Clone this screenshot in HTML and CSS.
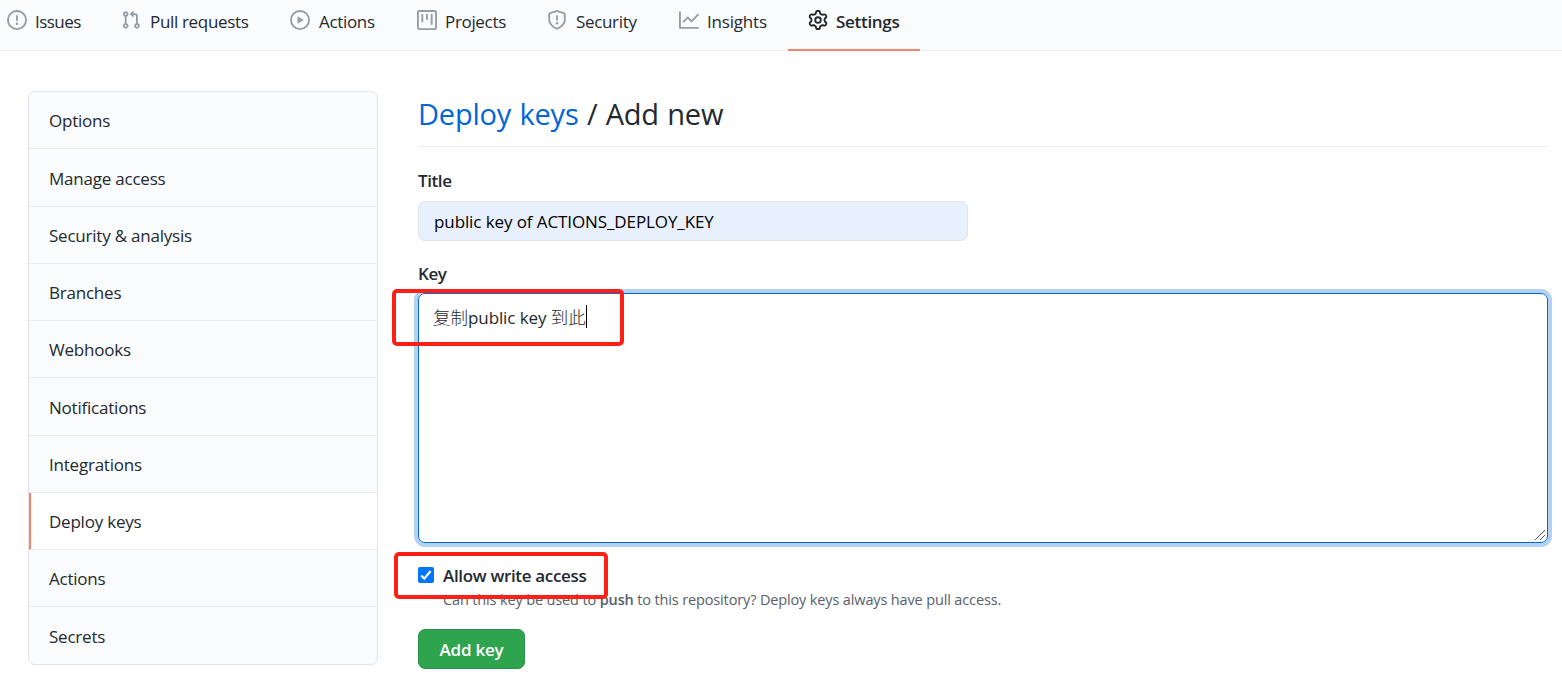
FILE: index.html
```html
<!DOCTYPE html>
<html lang="en">
<head>
<meta charset="utf-8">
<title>Deploy keys</title>
<link rel="stylesheet" href="styles.css">
</head>
<body>
<nav class="tabs">
  <a class="tab tab-issues"><svg class="icon" viewBox="0 0 16 16"><path fill-rule="evenodd" d="M8 1.5a6.5 6.5 0 100 13 6.5 6.5 0 000-13zM0 8a8 8 0 1116 0A8 8 0 010 8zm9 3a1 1 0 11-2 0 1 1 0 012 0zm-.25-6.25a.75.75 0 00-1.5 0v3.5a.75.75 0 001.5 0v-3.5z"/></svg><span>Issues</span></a>
  <a class="tab tab-pulls"><svg class="icon" viewBox="0 0 16 16"><path fill-rule="evenodd" d="M7.177 3.073L9.573.677A.25.25 0 0110 .854v4.792a.25.25 0 01-.427.177L7.177 3.427a.25.25 0 010-.354zM3.75 2.5a.75.75 0 100 1.5.75.75 0 000-1.5zm-2.25.75a2.25 2.25 0 113 2.122v5.256a2.251 2.251 0 11-1.5 0V5.372A2.25 2.25 0 011.5 3.25zM11 2.5h-1V4h1a1 1 0 011 1v5.628a2.251 2.251 0 101.5 0V5A2.5 2.5 0 0011 2.5zm1 10.25a.75.75 0 111.5 0 .75.75 0 01-1.5 0zM3.75 12a.75.75 0 100 1.5.75.75 0 000-1.5z"/></svg><span>Pull requests</span></a>
  <a class="tab tab-actions"><svg class="icon" viewBox="0 0 16 16"><path fill-rule="evenodd" d="M1.5 8a6.5 6.5 0 1113 0 6.5 6.5 0 01-13 0zM8 0a8 8 0 100 16A8 8 0 008 0zM6.379 5.227A.25.25 0 006 5.442v5.117a.25.25 0 00.379.214l4.264-2.559a.25.25 0 000-.428L6.379 5.227z"/></svg><span>Actions</span></a>
  <a class="tab tab-projects"><svg class="icon" viewBox="0 0 16 16"><path fill-rule="evenodd" d="M1.75 0A1.75 1.75 0 000 1.75v12.5C0 15.216.784 16 1.75 16h12.5A1.75 1.75 0 0016 14.25V1.75A1.75 1.75 0 0014.25 0H1.75zM1.5 1.75a.25.25 0 01.25-.25h12.5a.25.25 0 01.25.25v12.5a.25.25 0 01-.25.25H1.75a.25.25 0 01-.25-.25V1.75zM11.75 3a.75.75 0 00-.75.75v7.5a.75.75 0 001.5 0v-7.5a.75.75 0 00-.75-.75zm-8.25.75a.75.75 0 011.5 0v5.5a.75.75 0 01-1.5 0v-5.5zM8 3a.75.75 0 00-.75.75v3.5a.75.75 0 001.5 0v-3.5A.75.75 0 008 3z"/></svg><span>Projects</span></a>
  <a class="tab tab-security"><svg class="icon" viewBox="0 0 16 16"><path fill-rule="evenodd" d="M7.467.133a1.75 1.75 0 011.066 0l5.25 1.68A1.75 1.75 0 0115 3.48V7c0 1.566-.32 3.182-1.303 4.682-.983 1.498-2.585 2.813-5.032 3.855a1.7 1.7 0 01-1.33 0c-2.447-1.042-4.049-2.357-5.032-3.855C1.32 10.182 1 8.566 1 7V3.48a1.75 1.75 0 011.217-1.667l5.25-1.68zm.61 1.429a.25.25 0 00-.153 0l-5.25 1.68a.25.25 0 00-.174.238V7c0 1.358.275 2.666 1.057 3.86.784 1.194 2.121 2.34 4.366 3.297a.2.2 0 00.154 0c2.245-.956 3.582-2.104 4.366-3.298C13.225 9.666 13.5 8.36 13.5 7V3.48a.25.25 0 00-.174-.237l-5.25-1.68zM9 10.5a1 1 0 11-2 0 1 1 0 012 0zm-.25-5.75a.75.75 0 10-1.5 0v3a.75.75 0 001.5 0v-3z"/></svg><span>Security</span></a>
  <a class="tab tab-insights"><svg class="icon" viewBox="0 0 16 16"><path fill-rule="evenodd" d="M1.5 1.75a.75.75 0 00-1.5 0v12.5c0 .414.336.75.75.75h14.5a.75.75 0 000-1.5H1.5V1.75zm14.28 2.53a.75.75 0 00-1.06-1.06L10 7.94 7.53 5.47a.75.75 0 00-1.06 0L3.22 8.72a.75.75 0 001.06 1.06L7 7.06l2.47 2.47a.75.75 0 001.06 0l5.25-5.25z"/></svg><span>Insights</span></a>
  <a class="tab tab-settings"><svg class="icon" viewBox="0 0 16 16"><path fill-rule="evenodd" d="M7.429 1.525a6.593 6.593 0 011.142 0c.036.003.108.036.137.146l.289 1.105c.147.56.55.967.997 1.189.174.086.341.183.501.29.417.278.97.423 1.53.27l1.102-.303c.11-.03.175.016.195.046.219.31.41.641.573.989.014.031.022.11-.059.19l-.815.806c-.411.406-.562.957-.53 1.456a4.588 4.588 0 010 .582c-.032.499.119 1.05.53 1.456l.815.806c.08.08.073.159.059.19a6.494 6.494 0 01-.573.99c-.02.029-.086.074-.195.045l-1.103-.303c-.559-.153-1.112-.008-1.529.27-.16.107-.327.204-.5.29-.449.222-.851.628-.998 1.189l-.289 1.105c-.029.11-.101.143-.137.146a6.613 6.613 0 01-1.142 0c-.036-.003-.108-.037-.137-.146l-.289-1.105c-.147-.56-.55-.967-.997-1.189a4.502 4.502 0 01-.501-.29c-.417-.278-.97-.423-1.53-.27l-1.102.303c-.11.03-.175-.016-.195-.046a6.492 6.492 0 01-.573-.989c-.014-.031-.022-.11.059-.19l.815-.806c.411-.406.562-.957.53-1.456a4.587 4.587 0 010-.582c.032-.499-.119-1.05-.53-1.456l-.815-.806c-.08-.08-.073-.159-.059-.19a6.44 6.44 0 01.573-.99c.02-.029.086-.075.195-.045l1.103.303c.559.153 1.112.008 1.529-.27.16-.107.327-.204.5-.29.449-.222.851-.628.998-1.189l.289-1.105c.029-.11.101-.143.137-.146zM8 0c-.236 0-.47.01-.701.03-.743.065-1.29.615-1.458 1.261l-.29 1.106c-.017.066-.078.158-.211.224a5.994 5.994 0 00-.668.386c-.123.082-.233.09-.3.071L3.27 2.776c-.644-.177-1.392.02-1.82.63a7.977 7.977 0 00-.704 1.217c-.315.675-.111 1.422.363 1.891l.815.806c.05.048.098.147.088.294a6.084 6.084 0 000 .772c.01.147-.038.246-.088.294l-.815.806c-.474.469-.678 1.216-.363 1.891.2.428.436.835.704 1.218.428.609 1.176.806 1.82.63l1.103-.303c.066-.019.176-.011.299.071.213.143.436.272.668.386.133.066.194.158.212.224l.289 1.106c.169.646.715 1.196 1.458 1.26a8.094 8.094 0 001.402 0c.743-.064 1.29-.614 1.458-1.26l.29-1.106c.017-.066.078-.158.211-.224a5.98 5.98 0 00.668-.386c.123-.082.233-.09.3-.071l1.102.302c.644.177 1.392-.02 1.82-.63.268-.382.505-.789.704-1.217.315-.675.111-1.422-.364-1.891l-.814-.806c-.05-.048-.098-.147-.088-.294a6.1 6.1 0 000-.772c-.01-.147.039-.246.088-.294l.814-.806c.475-.469.679-1.216.364-1.891a7.992 7.992 0 00-.704-1.218c-.428-.609-1.176-.806-1.82-.63l-1.103.303c-.066.019-.176.011-.299-.071a5.991 5.991 0 00-.668-.386c-.133-.066-.194-.158-.212-.224L10.16 1.29C9.99.645 9.444.095 8.701.031A8.094 8.094 0 008 0zm1.5 8a1.5 1.5 0 11-3 0 1.5 1.5 0 013 0zM11 8a3 3 0 11-6 0 3 3 0 016 0z"/></svg><span>Settings</span></a>
</nav>
<div class="layout">
  <aside class="menu">
    <a class="menu-item">Options</a>
    <a class="menu-item">Manage access</a>
    <a class="menu-item">Security &amp; analysis</a>
    <a class="menu-item">Branches</a>
    <a class="menu-item">Webhooks</a>
    <a class="menu-item">Notifications</a>
    <a class="menu-item">Integrations</a>
    <a class="menu-item selected">Deploy keys</a>
    <a class="menu-item">Actions</a>
    <a class="menu-item">Secrets</a>
  </aside>
  <main class="content">
    <h2 class="heading"><a>Deploy keys</a> / Add new</h2>
    <div class="label label-title">Title</div>
    <div class="input">public key of <span class="caps">ACTIONS_DEPLOY_KEY</span></div>
    <div class="label label-key">Key</div>
    <div class="textarea"><span class="typed">复制<span class="latin">public key </span>到此</span><i class="caret"></i>
      <svg class="grip" viewBox="0 0 10 10"><path d="M0 10L10 0M5 10L10 5"/></svg>
      <div class="mark mark-key"></div>
    </div>
    <div class="check-row">
      <svg class="checkbox" viewBox="0 0 16 16"><rect width="16" height="16" rx="2"/><path d="M3.2 8.5L6.3 11.6L12.6 4"/></svg>
      <span class="check-label">Allow write access</span>
      <div class="mark mark-write"></div>
    </div>
    <p class="note">Can this key be used to <b>push</b> to this repository? Deploy keys always have pull access.</p>
    <div class="button">Add key</div>
  </main>
</div>
</body>
</html>
```

FILE: styles.css
```css
* { box-sizing: border-box; }
body {
  margin: 0;
  height: 679px;
  overflow: hidden;
  background: #fff;
  color: #24292e;
  font: 400 17px/26px "Open Sans", "Noto Sans CJK SC", sans-serif;
  letter-spacing: -0.22px;
  white-space: nowrap;
}
.tabs {
  display: flex;
  height: 51px;
  background: #fafbfc;
  border-bottom: 1px solid #eaecef;
  letter-spacing: -0.33px;
}
.tab {
  display: flex;
  flex: none;
  height: 51px;
  padding: 9px 0 0 20px;
}
.icon {
  width: 20px;
  height: 20px;
  margin: 1px 8px 0 0;
  flex: none;
  fill: #959da5;
}
.tab-issues { width: 114px; margin-left: -13px; letter-spacing: -0.55px; }
.tab-pulls { width: 169px; }
.tab-pulls .icon, .tab-actions .icon { margin-right: 9px; }
.tab-actions { width: 127px; }
.tab-projects { width: 130px; }
.tab-security { width: 132px; }
.tab-security .icon { margin-right: 9px; }
.tab-insights { width: 129px; letter-spacing: -0.2px; }
.tab-settings {
  width: 132px;
  border-bottom: 2px solid #f9826c;
  font-weight: 600;
  letter-spacing: -0.3px;
}
.tab-settings .icon { fill: #24292e; }
.layout {
  display: flex;
  gap: 40px;
  padding: 40px 14px 0 28px;
}
.menu {
  flex: none;
  width: 350px;
  height: 574px;
  border: 1px solid #e1e4e8;
  border-radius: 7px;
  overflow: hidden;
  background: #fafbfc;
}
.menu-item {
  display: block;
  height: 57.25px;
  padding: 16.3px 0 0 20px;
  border-bottom: 1px solid #eaecef;
}
.menu-item:last-child { border-bottom: 0; }
.menu-item.selected {
  padding-left: 18px;
  border-left: 2px solid #f9826c;
  background: #fff;
}
.content { flex: 1; min-width: 0; }
.heading {
  height: 56px;
  margin: 0 0 21px;
  border-bottom: 1px solid #eaecef;
  font-size: 29px;
  font-weight: 400;
  line-height: 46px;
  letter-spacing: -0.2px;
  word-spacing: 1px;
}
.heading a { color: #0366d6; }
.label { font-weight: 600; letter-spacing: -0.4px; }
.label-title { height: 33px; }
.input {
  width: 550px;
  height: 40px;
  padding: 7px 15px;
  margin-bottom: 20px;
  border: 1px solid #e1e4e8;
  border-radius: 7px;
  background: #e8f0fe;
  color: #000;
  letter-spacing: -0.1px;
}
.label-key { height: 32px; }
.textarea {
  position: relative;
  display: flex;
  width: 1130px;
  height: 250px;
  padding: 10px 14px;
  border: 1px solid #0366d6;
  border-radius: 7px;
  box-shadow: 0 0 0 4px rgba(3, 102, 214, 0.3);
}
.typed {
  font-size: 17.5px;
  font-weight: 300;
  letter-spacing: 0;
}
.latin { font-size: 17px; font-weight: 400; letter-spacing: -0.1px; }
.caret {
  width: 1px;
  height: 23px;
  margin-top: 1px;
  background: #000;
}
.grip {
  position: absolute;
  right: 2px;
  bottom: 2px;
  width: 10px;
  height: 10px;
  fill: none;
  stroke: #555;
  stroke-width: 1;
}
.mark {
  position: absolute;
  border: 4px solid #ff1f14;
  border-radius: 5px;
}
.mark-key { left: -27px; top: -5px; width: 232px; height: 57px; }
.mark-write { left: -24px; top: -11px; width: 214px; height: 47px; }
.check-row {
  position: relative;
  display: flex;
  gap: 9px;
  height: 24px;
  margin-top: 20px;
}
.checkbox { width: 16px; height: 16px; margin-top: 4px; fill: #0075ff; }
.checkbox path { fill: none; stroke: #fff; stroke-width: 2.2; }
.check-label { font-weight: 600; letter-spacing: -0.33px; }
.note {
  margin: 0;
  padding-left: 25px;
  height: 42px;
  color: #586069;
  font-size: 14.5px;
  line-height: 26px;
  letter-spacing: -0.14px;
}
.note b { font-weight: 600; }
.button {
  width: 107px;
  height: 40px;
  border: 1px solid #2a9147;
  border-radius: 7px;
  background: #2ea44f;
  color: #fff;
  font-weight: 600;
  line-height: 39px;
  text-align: center;
}
```
